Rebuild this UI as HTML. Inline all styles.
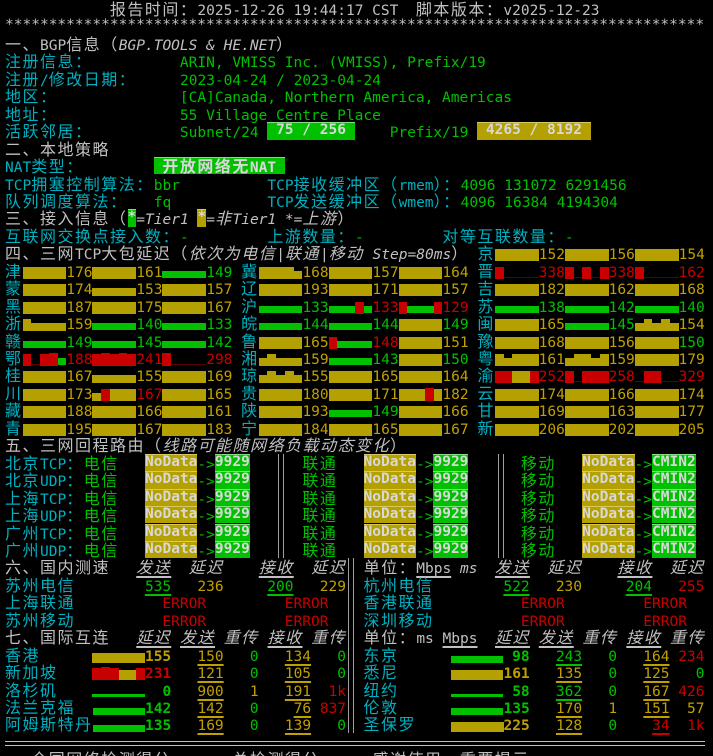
<!DOCTYPE html>
<html><head><meta charset="utf-8"><style>
body{margin:0;background:#000}
#s{position:relative;width:713px;height:756px;overflow:hidden;background:#000;font-family:"DejaVu Sans Mono","Liberation Mono",monospace;font-size:14.53px;letter-spacing:0;color:#c0c0c0}
.l{position:absolute;left:5px;height:17.45px;line-height:17.45px;white-space:pre}
.c{font-family:"Noto Sans CJK SC","WenQuanYi Zen Hei",sans-serif;font-size:16px;letter-spacing:1.5px}
t{color:#00b0c0}g{color:#00c000}y{color:#c0a000}r{color:#c80000}w{color:#c0c0c0}
i{font-style:italic}
.u{text-decoration:underline;text-underline-offset:3px;text-decoration-thickness:2px}
.b{font-weight:bold}
k{display:inline-block;width:8.75px;height:17.45px;vertical-align:top;letter-spacing:0}
k.g{background:linear-gradient(transparent 5px,#b4a000 5px,#b4a000 17px,transparent 17px)}
k.h{background:linear-gradient(transparent 9px,#b4a000 9px,#b4a000 17px,transparent 17px)}
k.G{background:linear-gradient(transparent 9px,#00c000 9px,#00c000 16px,transparent 16px)}
k.r{background:linear-gradient(transparent 5px,#c80000 5px,#c80000 17px,transparent 17px)}
k.e{background:linear-gradient(transparent 15px,#5a0000 15px,#5a0000 16px,transparent 16px)}
k.q{background:linear-gradient(transparent 7px,#b4a000 7px,#b4a000 17px,transparent 17px)}
k.P{background:linear-gradient(transparent 10px,#00c000 10px,#00c000 17px,transparent 17px)}
k.T{background:linear-gradient(transparent 13px,#00c000 13px,#00c000 16px,transparent 16px)}
k.R{background:linear-gradient(transparent 4px,#c80000 4px,#c80000 17px,transparent 17px)}
.bx{display:inline-block;height:17.45px;vertical-align:top;font-weight:bold;color:#d8d8d8}
.by{background:#b4a000;box-shadow:inset 0 1px #d8c860}
.bg{background:#00c000;box-shadow:inset 0 1px #80e080}
.v{position:absolute;width:1px;background:#a0a0a0}
.hl{position:absolute;left:5px;width:700px;height:1px;background:#c0c0c0}
</style></head><body><div id="s">
<div class="l" style="top:0px">            <w class="c">报告时间：</w>2025-12-26 19:44:17 CST  <w class="c">脚本版本：</w>v2025-12-23</div>
<div class="l" style="top:17.45px">********************************************************************************</div>
<div class="l" style="top:34.9px"><w class="c">一、</w>BGP<w class="c">信息（</w><i>BGP.TOOLS &amp; HE.NET</i><w class="c">）</w></div>
<div class="l" style="top:52.35px"><t class="c">注册信息：</t>          <g>ARIN, VMISS Inc. (VMISS), Prefix/19</g></div>
<div class="l" style="top:69.8px"><t class="c">注册</t><t>/</t><t class="c">修改日期：</t>     <g>2023-04-24 / 2023-04-24</g></div>
<div class="l" style="top:87.25px"><t class="c">地区：</t>              <g>[CA]Canada, Northern America, Americas</g></div>
<div class="l" style="top:104.7px"><t class="c">地址：</t>              <g>55 Village Centre Place</g></div>
<div class="l" style="top:122.15px"><t class="c">活跃邻居：</t>          <g>Subnet/24 </g><span class="bx bg"> 75 / 256 </span>    <g>Prefix/19 </g><span class="bx by"> 4265 / 8192 </span></div>
<div class="l" style="top:139.6px"><w class="c">二、本地策略</w></div>
<div class="l" style="top:157.05px"><t>NAT</t><t class="c">类型：</t>        <span class="bx bg"> <span class="c">开放网络无</span>NAT </span></div>
<div class="l" style="top:174.5px"><t>TCP</t><t class="c">拥塞控制算法：</t><g>bbr</g>          <t>TCP</t><t class="c">接收缓冲区（</t><t>rmem</t><t class="c">）：</t><g>4096 131072 6291456</g></div>
<div class="l" style="top:191.95px"><t class="c">队列调度算法：</t>   <g>fq</g>           <t>TCP</t><t class="c">发送缓冲区（</t><t>wmem</t><t class="c">）：</t><g>4096 16384 4194304</g></div>
<div class="l" style="top:209.4px"><w class="c">三、接入信息（</w><span class="bx bg">*</span><i>=Tier1 </i><span class="bx by">*</span><i>=<span class="c">非</span>Tier1 *=<span class="c">上游</span></i><w class="c">）</w></div>
<div class="l" style="top:226.85px"><t class="c">互联网交换点接入数：</t><g>-</g>         <t class="c">上游数量：</t><g>-</g>         <t class="c">对等互联数量：</t><g>-</g></div>
<div class="l" style="top:244.3px"><w class="c">四、三网</w>TCP<w class="c">大包延迟（</w><i><span class="c">依次为电信</span>|<span class="c">联通</span>|<span class="c">移动</span> Step=80ms</i><w class="c">）</w> <t class="c">京</t><k class="g"></k><k class="g"></k><k class="g"></k><k class="g"></k><k class="g"></k><y>152</y><k class="g"></k><k class="g"></k><k class="g"></k><k class="g"></k><k class="g"></k><y>156</y><k class="g"></k><k class="g"></k><k class="g"></k><k class="g"></k><k class="g"></k><y>154</y></div>
<div class="l" style="top:261.75px"><t class="c">津</t><k class="g"></k><k class="g"></k><k class="g"></k><k class="g"></k><k class="g"></k><y>176</y><k class="g"></k><k class="g"></k><k class="g"></k><k class="g"></k><k class="g"></k><y>161</y><k class="G"></k><k class="G"></k><k class="G"></k><k class="G"></k><k class="G"></k><g>149</g> <t class="c">冀</t><k class="g"></k><k class="g"></k><k class="g"></k><k class="g"></k><k class="h"></k><y>168</y><k class="g"></k><k class="g"></k><k class="g"></k><k class="g"></k><k class="g"></k><y>157</y><k class="g"></k><k class="g"></k><k class="g"></k><k class="g"></k><k class="g"></k><y>164</y> <t class="c">晋</t><k class="r"></k><k class="e"></k><k class="e"></k><k class="e"></k><k class="e"></k><r>338</r><k class="r"></k><k class="e"></k><k class="r"></k><k class="e"></k><k class="r"></k><r>338</r><k class="r"></k><k class="e"></k><k class="e"></k><k class="e"></k><k class="e"></k><r>162</r></div>
<div class="l" style="top:279.2px"><t class="c">蒙</t><k class="g"></k><k class="g"></k><k class="g"></k><k class="g"></k><k class="g"></k><y>174</y><k class="h"></k><k class="h"></k><k class="h"></k><k class="h"></k><k class="h"></k><y>153</y><k class="g"></k><k class="g"></k><k class="g"></k><k class="g"></k><k class="g"></k><y>157</y> <t class="c">辽</t><k class="g"></k><k class="g"></k><k class="g"></k><k class="g"></k><k class="g"></k><y>193</y><k class="g"></k><k class="g"></k><k class="g"></k><k class="g"></k><k class="g"></k><y>171</y><k class="g"></k><k class="g"></k><k class="g"></k><k class="g"></k><k class="g"></k><y>157</y> <t class="c">吉</t><k class="g"></k><k class="g"></k><k class="g"></k><k class="g"></k><k class="g"></k><y>182</y><k class="g"></k><k class="g"></k><k class="g"></k><k class="g"></k><k class="g"></k><y>162</y><k class="g"></k><k class="g"></k><k class="g"></k><k class="g"></k><k class="g"></k><y>168</y></div>
<div class="l" style="top:296.65px"><t class="c">黑</t><k class="g"></k><k class="g"></k><k class="g"></k><k class="g"></k><k class="g"></k><y>187</y><k class="g"></k><k class="g"></k><k class="g"></k><k class="g"></k><k class="g"></k><y>175</y><k class="g"></k><k class="g"></k><k class="g"></k><k class="g"></k><k class="g"></k><y>167</y> <t class="c">沪</t><k class="G"></k><k class="G"></k><k class="G"></k><k class="G"></k><k class="G"></k><g>133</g><k class="G"></k><k class="G"></k><k class="G"></k><k class="r"></k><k class="G"></k><r>133</r><k class="r"></k><k class="G"></k><k class="G"></k><k class="G"></k><k class="r"></k><r>129</r> <t class="c">苏</t><k class="G"></k><k class="G"></k><k class="G"></k><k class="G"></k><k class="G"></k><g>138</g><k class="G"></k><k class="G"></k><k class="G"></k><k class="G"></k><k class="G"></k><g>142</g><k class="G"></k><k class="G"></k><k class="G"></k><k class="G"></k><k class="G"></k><g>140</g></div>
<div class="l" style="top:314.1px"><t class="c">浙</t><k class="g"></k><k class="h"></k><k class="h"></k><k class="h"></k><k class="h"></k><y>159</y><k class="G"></k><k class="G"></k><k class="G"></k><k class="G"></k><k class="G"></k><g>140</g><k class="G"></k><k class="G"></k><k class="G"></k><k class="G"></k><k class="G"></k><g>133</g> <t class="c">皖</t><k class="G"></k><k class="G"></k><k class="G"></k><k class="G"></k><k class="G"></k><g>144</g><k class="G"></k><k class="G"></k><k class="G"></k><k class="G"></k><k class="G"></k><g>144</g><k class="g"></k><k class="g"></k><k class="g"></k><k class="g"></k><k class="g"></k><g>149</g> <t class="c">闽</t><k class="g"></k><k class="g"></k><k class="g"></k><k class="g"></k><k class="g"></k><y>165</y><k class="G"></k><k class="G"></k><k class="G"></k><k class="G"></k><k class="G"></k><g>145</g><k class="h"></k><k class="g"></k><k class="h"></k><k class="g"></k><k class="h"></k><y>154</y></div>
<div class="l" style="top:331.55px"><t class="c">赣</t><k class="G"></k><k class="G"></k><k class="G"></k><k class="G"></k><k class="G"></k><g>149</g><k class="G"></k><k class="G"></k><k class="G"></k><k class="G"></k><k class="G"></k><g>145</g><k class="G"></k><k class="G"></k><k class="G"></k><k class="G"></k><k class="G"></k><g>142</g> <t class="c">鲁</t><k class="g"></k><k class="g"></k><k class="g"></k><k class="g"></k><k class="g"></k><y>165</y><k class="r"></k><k class="G"></k><k class="G"></k><k class="G"></k><k class="G"></k><r>148</r><k class="g"></k><k class="g"></k><k class="g"></k><k class="g"></k><k class="g"></k><y>151</y> <t class="c">豫</t><k class="g"></k><k class="g"></k><k class="g"></k><k class="g"></k><k class="g"></k><y>168</y><k class="g"></k><k class="g"></k><k class="g"></k><k class="g"></k><k class="g"></k><y>156</y><k class="g"></k><k class="g"></k><k class="g"></k><k class="g"></k><k class="g"></k><g>150</g></div>
<div class="l" style="top:349px"><t class="c">鄂</t><k class="r"></k><k class="e"></k><k class="r"></k><k class="R"></k><k class="G"></k><r>188</r><k class="r"></k><k class="R"></k><k class="r"></k><k class="R"></k><k class="r"></k><r>241</r><k class="R"></k><k class="e"></k><k class="e"></k><k class="e"></k><k class="e"></k><r>298</r> <t class="c">湘</t><k class="h"></k><k class="g"></k><k class="h"></k><k class="h"></k><k class="h"></k><y>159</y><k class="G"></k><k class="G"></k><k class="G"></k><k class="G"></k><k class="G"></k><g>143</g><k class="g"></k><k class="g"></k><k class="g"></k><k class="g"></k><k class="g"></k><g>150</g> <t class="c">粤</t><k class="g"></k><k class="h"></k><k class="g"></k><k class="g"></k><k class="g"></k><y>161</y><k class="h"></k><k class="g"></k><k class="g"></k><k class="h"></k><k class="g"></k><y>159</y><k class="g"></k><k class="g"></k><k class="g"></k><k class="g"></k><k class="g"></k><y>179</y></div>
<div class="l" style="top:366.45px"><t class="c">桂</t><k class="g"></k><k class="g"></k><k class="g"></k><k class="g"></k><k class="g"></k><y>167</y><k class="h"></k><k class="h"></k><k class="h"></k><k class="h"></k><k class="h"></k><y>155</y><k class="g"></k><k class="g"></k><k class="g"></k><k class="g"></k><k class="g"></k><y>169</y> <t class="c">琼</t><k class="h"></k><k class="g"></k><k class="h"></k><k class="g"></k><k class="h"></k><y>155</y><k class="g"></k><k class="g"></k><k class="g"></k><k class="g"></k><k class="g"></k><y>165</y><k class="g"></k><k class="g"></k><k class="g"></k><k class="g"></k><k class="g"></k><y>164</y> <t class="c">渝</t><k class="r"></k><k class="r"></k><k class="g"></k><k class="g"></k><k class="r"></k><r>252</r><k class="r"></k><k class="e"></k><k class="r"></k><k class="r"></k><k class="r"></k><r>258</r><k class="e"></k><k class="r"></k><k class="r"></k><k class="e"></k><k class="e"></k><r>329</r></div>
<div class="l" style="top:383.9px"><t class="c">川</t><k class="g"></k><k class="g"></k><k class="g"></k><k class="g"></k><k class="g"></k><y>173</y><k class="h"></k><k class="r"></k><k class="g"></k><k class="g"></k><k class="g"></k><r>167</r><k class="g"></k><k class="g"></k><k class="g"></k><k class="g"></k><k class="g"></k><y>165</y> <t class="c">贵</t><k class="g"></k><k class="g"></k><k class="g"></k><k class="g"></k><k class="g"></k><y>180</y><k class="g"></k><k class="g"></k><k class="g"></k><k class="g"></k><k class="g"></k><y>171</y><k class="g"></k><k class="g"></k><k class="g"></k><k class="R"></k><k class="g"></k><y>182</y> <t class="c">云</t><k class="g"></k><k class="g"></k><k class="g"></k><k class="g"></k><k class="g"></k><y>174</y><k class="g"></k><k class="g"></k><k class="g"></k><k class="g"></k><k class="g"></k><y>166</y><k class="g"></k><k class="g"></k><k class="g"></k><k class="g"></k><k class="g"></k><y>174</y></div>
<div class="l" style="top:401.35px"><t class="c">藏</t><k class="g"></k><k class="g"></k><k class="g"></k><k class="g"></k><k class="g"></k><y>188</y><k class="g"></k><k class="g"></k><k class="g"></k><k class="g"></k><k class="g"></k><y>166</y><k class="g"></k><k class="g"></k><k class="g"></k><k class="g"></k><k class="g"></k><y>161</y> <t class="c">陕</t><k class="g"></k><k class="g"></k><k class="g"></k><k class="g"></k><k class="g"></k><y>193</y><k class="G"></k><k class="G"></k><k class="G"></k><k class="G"></k><k class="G"></k><g>149</g><k class="g"></k><k class="g"></k><k class="g"></k><k class="g"></k><k class="g"></k><y>166</y> <t class="c">甘</t><k class="g"></k><k class="g"></k><k class="g"></k><k class="g"></k><k class="g"></k><y>169</y><k class="g"></k><k class="g"></k><k class="g"></k><k class="g"></k><k class="g"></k><y>163</y><k class="g"></k><k class="g"></k><k class="g"></k><k class="g"></k><k class="g"></k><y>177</y></div>
<div class="l" style="top:418.8px"><t class="c">青</t><k class="g"></k><k class="g"></k><k class="g"></k><k class="g"></k><k class="g"></k><y>195</y><k class="g"></k><k class="g"></k><k class="g"></k><k class="g"></k><k class="g"></k><y>167</y><k class="g"></k><k class="g"></k><k class="g"></k><k class="g"></k><k class="g"></k><y>183</y> <t class="c">宁</t><k class="g"></k><k class="g"></k><k class="g"></k><k class="g"></k><k class="g"></k><y>184</y><k class="g"></k><k class="g"></k><k class="g"></k><k class="g"></k><k class="g"></k><y>165</y><k class="g"></k><k class="g"></k><k class="g"></k><k class="g"></k><k class="g"></k><y>167</y> <t class="c">新</t><k class="g"></k><k class="g"></k><k class="g"></k><k class="g"></k><k class="g"></k><y>206</y><k class="g"></k><k class="g"></k><k class="g"></k><k class="g"></k><k class="g"></k><y>202</y><k class="g"></k><k class="g"></k><k class="g"></k><k class="g"></k><k class="g"></k><y>205</y></div>
<div class="l" style="top:436.25px"><w class="c">五、三网回程路由（</w><i class="c">线路可能随网络负载动态变化</i><w class="c">）</w></div>
<div class="l" style="top:453.7px"><t class="c">北京</t><t>TCP</t><t class="c">：</t><g class="c">电信</g>   <span class="bx by">NoData</span><g>-&gt;</g><span class="bx bg">9929</span>      <g class="c">联通</g>   <span class="bx by">NoData</span><g>-&gt;</g><span class="bx bg">9929</span>      <g class="c">移动</g>   <span class="bx by">NoData</span><g>-&gt;</g><span class="bx bg">CMIN2</span></div>
<div class="l" style="top:471.15px"><t class="c">北京</t><t>UDP</t><t class="c">：</t><g class="c">电信</g>   <span class="bx by">NoData</span><g>-&gt;</g><span class="bx bg">9929</span>      <g class="c">联通</g>   <span class="bx by">NoData</span><g>-&gt;</g><span class="bx bg">9929</span>      <g class="c">移动</g>   <span class="bx by">NoData</span><g>-&gt;</g><span class="bx bg">CMIN2</span></div>
<div class="l" style="top:488.6px"><t class="c">上海</t><t>TCP</t><t class="c">：</t><g class="c">电信</g>   <span class="bx by">NoData</span><g>-&gt;</g><span class="bx bg">9929</span>      <g class="c">联通</g>   <span class="bx by">NoData</span><g>-&gt;</g><span class="bx bg">9929</span>      <g class="c">移动</g>   <span class="bx by">NoData</span><g>-&gt;</g><span class="bx bg">CMIN2</span></div>
<div class="l" style="top:506.05px"><t class="c">上海</t><t>UDP</t><t class="c">：</t><g class="c">电信</g>   <span class="bx by">NoData</span><g>-&gt;</g><span class="bx bg">9929</span>      <g class="c">联通</g>   <span class="bx by">NoData</span><g>-&gt;</g><span class="bx bg">9929</span>      <g class="c">移动</g>   <span class="bx by">NoData</span><g>-&gt;</g><span class="bx bg">CMIN2</span></div>
<div class="l" style="top:523.5px"><t class="c">广州</t><t>TCP</t><t class="c">：</t><g class="c">电信</g>   <span class="bx by">NoData</span><g>-&gt;</g><span class="bx bg">9929</span>      <g class="c">联通</g>   <span class="bx by">NoData</span><g>-&gt;</g><span class="bx bg">9929</span>      <g class="c">移动</g>   <span class="bx by">NoData</span><g>-&gt;</g><span class="bx bg">CMIN2</span></div>
<div class="l" style="top:540.95px"><t class="c">广州</t><t>UDP</t><t class="c">：</t><g class="c">电信</g>   <span class="bx by">NoData</span><g>-&gt;</g><span class="bx bg">9929</span>      <g class="c">联通</g>   <span class="bx by">NoData</span><g>-&gt;</g><span class="bx bg">9929</span>      <g class="c">移动</g>   <span class="bx by">NoData</span><g>-&gt;</g><span class="bx bg">CMIN2</span></div>
<div class="v" style="left:278px;top:453.7px;height:104.7px"></div><div class="v" style="left:283px;top:453.7px;height:104.7px"></div>
<div class="v" style="left:498px;top:453.7px;height:104.7px"></div><div class="v" style="left:503px;top:453.7px;height:104.7px"></div>
<div class="l" style="top:558.4px"><w class="c">六、国内测速</w>   <i class="c u">发送</i>  <i class="c">延迟</i>    <i class="c u">接收</i>  <i class="c">延迟</i>  <w class="c">单位：</w><span class="u">Mbps</span> <i>ms</i>  <i class="c u">发送</i>  <i class="c">延迟</i>    <i class="c u">接收</i>  <i class="c">延迟</i></div>
<div class="l" style="top:575.85px"><t class="c">苏州电信</t>        <g class="u">535</g>   <y>236</y>     <g class="u">200</g>   <y>229</y>  <t class="c">杭州电信</t>        <g class="u">522</g>   <y>230</y>     <g class="u">204</g>   <r>255</r></div>
<div class="l" style="top:593.3px"><t class="c">上海联通</t>          <r>ERROR</r>         <r>ERROR</r>    <t class="c">香港联通</t>          <r>ERROR</r>         <r>ERROR</r></div>
<div class="l" style="top:610.75px"><t class="c">苏州移动</t>          <r>ERROR</r>         <r>ERROR</r>    <t class="c">深圳移动</t>          <r>ERROR</r>         <r>ERROR</r></div>
<div class="l" style="top:628.2px"><w class="c">七、国际互连</w>   <i class="c u">延迟</i> <i class="c u">发送</i> <i class="c">重传</i> <i class="c u">接收</i> <i class="c">重传</i>  <w class="c">单位：</w>ms <span class="u">Mbps</span>  <i class="c u">延迟</i> <i class="c u">发送</i> <i class="c">重传</i> <i class="c u">接收</i> <i class="c">重传</i></div>
<div class="l" style="top:645.65px"><t class="c">香港</t>      <k class="q"></k><k class="q"></k><k class="q"></k><k class="q"></k><k class="q"></k><k class="q"></k><y class="b">155</y>   <y class="u">150</y>   <g>0</g>   <y class="u">134</y>   <g>0</g>  <t class="c">东京</t>      <k class="P"></k><k class="P"></k><k class="P"></k><k class="P"></k><k class="P"></k><k class="P"></k><g class="b"> 98</g>   <g class="u">243</g>   <g>0</g>   <y class="u">164</y> <r>234</r></div>
<div class="l" style="top:663.1px"><t class="c">新加坡</t>    <k class="r"></k><k class="R"></k><k class="r"></k><k class="q"></k><k class="q"></k><k class="r"></k><r class="b">231</r>   <y class="u">121</y>   <g>0</g>   <y class="u">105</y>   <g>0</g>  <t class="c">悉尼</t>      <k class="q"></k><k class="q"></k><k class="q"></k><k class="q"></k><k class="q"></k><k class="q"></k><y class="b">161</y>   <y class="u">135</y>   <g>0</g>   <y class="u">125</y>   <g>0</g></div>
<div class="l" style="top:680.55px"><t class="c">洛杉矶</t>    <k class="T"></k><k class="T"></k><k class="T"></k><k class="T"></k><k class="T"></k><k class="T"></k><g class="b">  0</g>   <y class="u">900</y>   <y>1</y>   <y class="u">191</y>  <r>1k</r>  <t class="c">纽约</t>      <k class="T"></k><k class="T"></k><k class="T"></k><k class="T"></k><k class="T"></k><k class="T"></k><g class="b"> 58</g>   <g class="u">362</g>   <g>0</g>   <y class="u">167</y> <r>426</r></div>
<div class="l" style="top:698px"><t class="c">法兰克福</t>  <k class="P"></k><k class="P"></k><k class="P"></k><k class="P"></k><k class="P"></k><k class="P"></k><g class="b">142</g>   <y class="u">142</y>   <g>0</g>    <y class="u">76</y> <r>837</r>  <t class="c">伦敦</t>      <k class="P"></k><k class="P"></k><k class="P"></k><k class="P"></k><k class="P"></k><k class="P"></k><g class="b">135</g>   <y class="u">170</y>   <y>1</y>   <y class="u">151</y>  <y>57</y></div>
<div class="l" style="top:715.45px"><t class="c">阿姆斯特丹</t><k class="P"></k><k class="P"></k><k class="P"></k><k class="P"></k><k class="P"></k><k class="P"></k><g class="b">135</g>   <y class="u">169</y>   <g>0</g>   <y class="u">139</y>   <g>0</g>  <t class="c">圣保罗</t>    <k class="q"></k><k class="q"></k><k class="q"></k><k class="q"></k><k class="q"></k><k class="q"></k><y class="b">225</y>   <y class="u">128</y>   <g>0</g>    <r class="u">34</r>  <r>1k</r></div>
<div class="v" style="left:348px;top:558.4px;height:174.5px"></div><div class="v" style="left:353px;top:558.4px;height:174.5px"></div>
<div class="hl" style="top:741px"></div><div class="hl" style="top:745px"></div>
<div class="l" style="top:750.35px"> <w class="c">·全国网络检测得分</w>       <w class="c">总检测得分</w>      <w class="c">感谢使用，重要提示</w></div>
</div></body></html>
